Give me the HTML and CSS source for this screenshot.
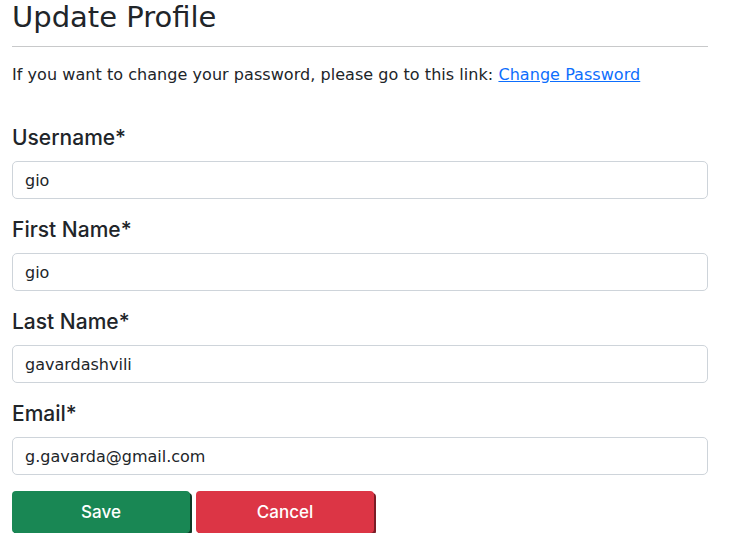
FILE: index.html
```html
<!DOCTYPE html>
<html>
<head>
<meta charset="utf-8">
<link rel="stylesheet" href="styles.css">
</head>
<body>
<div class="container">
  <h2 class="title">Update Profile</h2>
  <hr class="rule">
  <p class="note">If you want to change your password, please go to this link: <a href="#" class="link">Change Password</a></p>
  <form class="form">
    <div class="group">
      <label class="label">Username*</label>
      <input class="input" type="text" value="gio">
    </div>
    <div class="group">
      <label class="label">First Name*</label>
      <input class="input" type="text" value="gio">
    </div>
    <div class="group">
      <label class="label">Last Name*</label>
      <input class="input" type="text" value="gavardashvili">
    </div>
    <div class="group">
      <label class="label">Email*</label>
      <input class="input" type="text" value="g.gavarda@gmail.com">
    </div>
    <div class="actions">
      <button type="button" class="btn btn-save">Save</button>
      <button type="button" class="btn btn-cancel">Cancel</button>
    </div>
  </form>
</div>
</body>
</html>
```
FILE: styles.css
```css
* { box-sizing: border-box; }
html, body { margin: 0; padding: 0; background: #fff; }
body {
  font-family: "DejaVu Sans", "Open Sans", sans-serif;
  color: #212529;
  font-size: 16px;
}
.container {
  width: 720px;
  padding: 0 12px;
}
.title {
  margin: 0;
  font-size: 29px;
  font-weight: 400;
  line-height: 34px;
}
.rule {
  margin: 12px 0 0 0;
  border: 0;
  border-top: 1px solid #c8c9ca;
}
.note {
  margin: 16px 0 0 0;
  line-height: 24px;
  font-size: 16px;
  letter-spacing: 0.05px;
}
.link { color: #0d6efd; text-decoration: underline; }
.form { margin-top: 39px; }
.group {
  display: flex;
  flex-direction: column;
  margin-bottom: 19px;
}
.label {
  font-family: "Inter", "DejaVu Sans", sans-serif;
  font-size: 21px;
  font-weight: 500;
  line-height: 24px;
  margin-bottom: 11px;
}
.input {
  height: 38px;
  width: 100%;
  border: 1px solid #ced4da;
  border-radius: 5px;
  padding: 0 12px;
  font-family: inherit;
  font-size: 16px;
  color: #212529;
  background: #fff;
}
.actions {
  display: flex;
  gap: 6px;
  margin-top: -3px;
}
.btn {
  width: 178px;
  height: 42px;
  border: 0;
  border-radius: 4px;
  color: #fff;
  font-family: "Inter", "DejaVu Sans", sans-serif;
  font-size: 17px;
  font-weight: 500;
  padding: 0;
}
.btn-save { background: #198754; box-shadow: 2px 2px 0 #0d3a25; }
.btn-cancel { background: #dc3545; box-shadow: 2px 2px 0 #7a1c26; }
```
